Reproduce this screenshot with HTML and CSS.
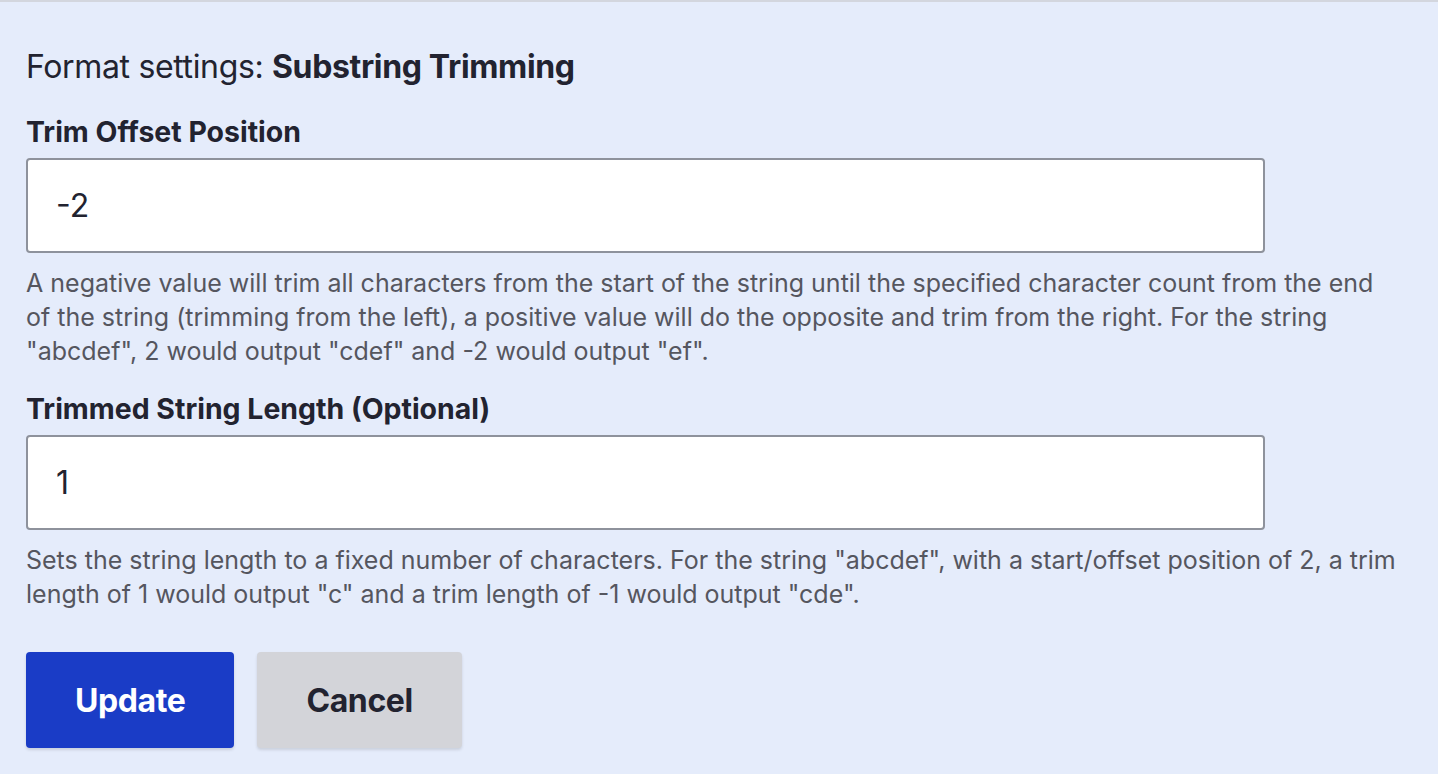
FILE: index.html
```html
<!DOCTYPE html>
<html lang="en">
<head>
<meta charset="utf-8">
<title>Format settings</title>
<link rel="stylesheet" href="styles.css">
</head>
<body>
<div class="panel">
  <h3 class="settings-title">Format settings: <strong>Substring Trimming</strong></h3>
  <div class="form-item">
    <label class="form-label" for="offset">Trim Offset Position</label>
    <input class="form-input" id="offset" type="text" value="-2">
    <div class="description">A negative value will trim all characters from the start of the string until the specified character count from the end of the string (trimming from the left), a positive value will do the opposite and trim from the right. For the string "abcdef", 2 would output "cdef" and -2 would output "ef".</div>
  </div>
  <div class="form-item">
    <label class="form-label" for="length">Trimmed String Length (Optional)</label>
    <input class="form-input" id="length" type="text" value="1">
    <div class="description">Sets the string length to a fixed number of characters. For the string "abcdef", with a start/offset position of 2, a trim length of 1 would output "c" and a trim length of -1 would output "cde".</div>
  </div>
  <div class="actions">
    <button class="button button-primary" type="button">Update</button>
    <button class="button" type="button">Cancel</button>
  </div>
</div>
</body>
</html>
```
FILE: styles.css
```css
html, body {
  margin: 0;
  padding: 0;
}
body {
  background: #e5ecfb;
  border-top: 2px solid #d3d6de;
  font-family: Inter, "Noto Sans", sans-serif;
  color: #222330;
  min-height: 772px;
}
.panel {
  padding: 45px 35px 0 26px;
}
.settings-title {
  margin: 0;
  font-size: 32px;
  line-height: 40px;
  font-weight: 400;
  letter-spacing: -0.35px;
}
.settings-title strong {
  font-weight: 700;
}
.form-item {
  margin-top: 27px;
}
.form-item + .form-item {
  margin-top: 23px;
}
.form-label {
  display: block;
  font-size: 28.44px;
  line-height: 36px;
  font-weight: 700;
  margin-bottom: 8px;
}
.form-input {
  display: block;
  box-sizing: border-box;
  width: 1239px;
  height: 95px;
  margin: 0;
  padding: 0 28px;
  border: 2px solid #8e929c;
  border-radius: 4px;
  background: #fff;
  font-family: inherit;
  font-size: 32px;
  color: #222330;
  outline: none;
}
.description {
  margin-top: 13px;
  font-size: 25px;
  line-height: 34px;
  color: #55565f;
}
.actions {
  display: flex;
  gap: 23px;
  margin-top: 41px;
}
.button {
  box-sizing: border-box;
  height: 96px;
  padding: 0 49px;
  border: 0;
  border-radius: 4px;
  background: #d3d4d9;
  color: #222330;
  font-family: inherit;
  font-size: 32px;
  font-weight: 700;
  letter-spacing: -0.4px;
  box-shadow: 0 2px 3px rgba(0, 0, 0, 0.12);
}
.button-primary {
  background: #1a3cc6;
  color: #fff;
}
```
